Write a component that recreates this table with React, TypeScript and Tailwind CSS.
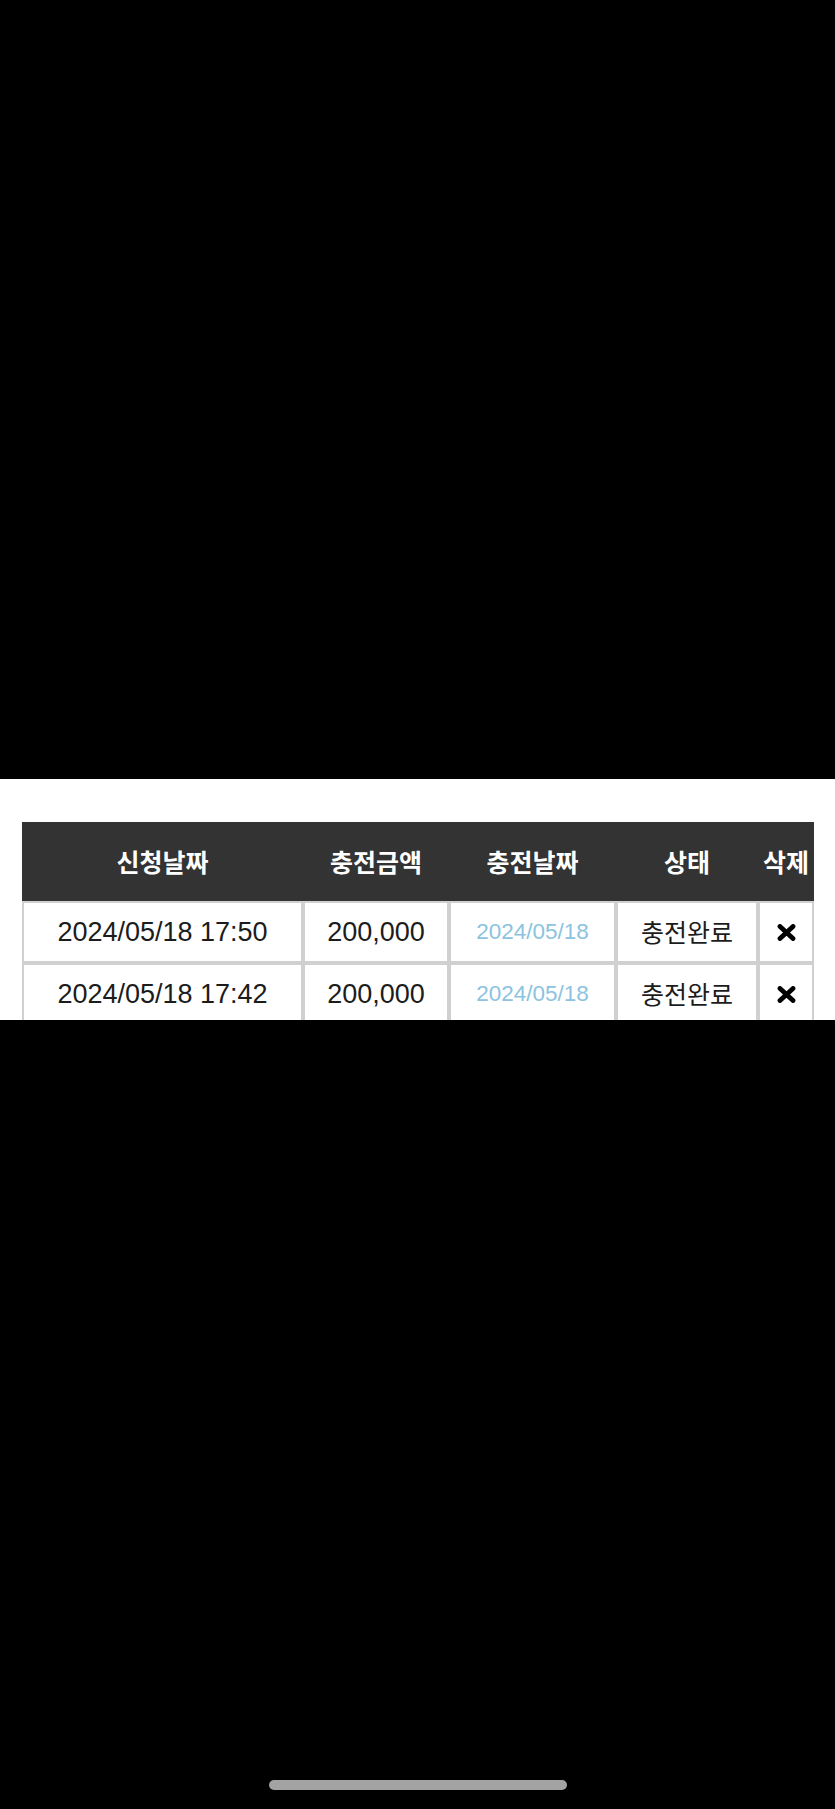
const rows = [
  { applied: "2024/05/18 17:50", amount: "200,000", charged: "2024/05/18", status: "충전완료" },
  { applied: "2024/05/18 17:42", amount: "200,000", charged: "2024/05/18", status: "충전완료" },
];

const cols = "grid grid-cols-[281px_146px_167px_142px_56px]";
const num = "font-['Liberation_Sans',Arial,sans-serif]";
const kr = "font-['Noto_Sans_CJK_KR','Noto_Sans',sans-serif]";

const DeleteIcon = () => (
  <svg width="19" height="17" viewBox="0 0 19 17">
    <path d="M3 2.5 L16 14.5 M16 2.5 L3 14.5" stroke="#000" strokeWidth="4.8" strokeLinecap="round" />
  </svg>
);

const App = () => {
  return (
    <div className="bg-black w-[835px] h-[1809px] flex flex-col">
      <div className="h-[779px] shrink-0" />
      <div className="h-[241px] shrink-0 bg-white overflow-hidden pt-[43px] pl-[22px]">
        <div className="w-[792px]">
          <div className={`${cols} h-[79px] bg-[#333333] text-white ${kr} font-bold text-[25px]`}>
            {["신청날짜", "충전금액", "충전날짜", "상태", "삭제"].map((h) => (
              <div key={h} className="flex items-center justify-center whitespace-nowrap">
                {h}
              </div>
            ))}
          </div>
          {rows.map((r, i) => (
            <div key={i} className={`${cols} h-[62px]`}>
              <div className={`border-2 border-[#d0d0d0] flex items-center justify-center text-[27px] text-[#1c1c1c] ${num}`}>
                {r.applied}
              </div>
              <div className={`border-2 border-[#d0d0d0] flex items-center justify-center text-[27px] text-[#1c1c1c] ${num}`}>
                {r.amount}
              </div>
              <div className={`border-2 border-[#d0d0d0] flex items-center justify-center text-[22.5px] text-[#8cc3e0] ${num}`}>
                {r.charged}
              </div>
              <div className={`border-2 border-[#d0d0d0] flex items-center justify-center text-[25px] text-[#1c1c1c] ${kr}`}>
                {r.status}
              </div>
              <div className="border-2 border-[#d0d0d0] flex items-center justify-center">
                <DeleteIcon />
              </div>
            </div>
          ))}
        </div>
      </div>
      <div className="flex-1 flex items-end justify-center pb-[19px]">
        <div className="w-[298px] h-[10px] rounded-full bg-[#a3a3a3]" />
      </div>
    </div>
  );
};

export default App;
